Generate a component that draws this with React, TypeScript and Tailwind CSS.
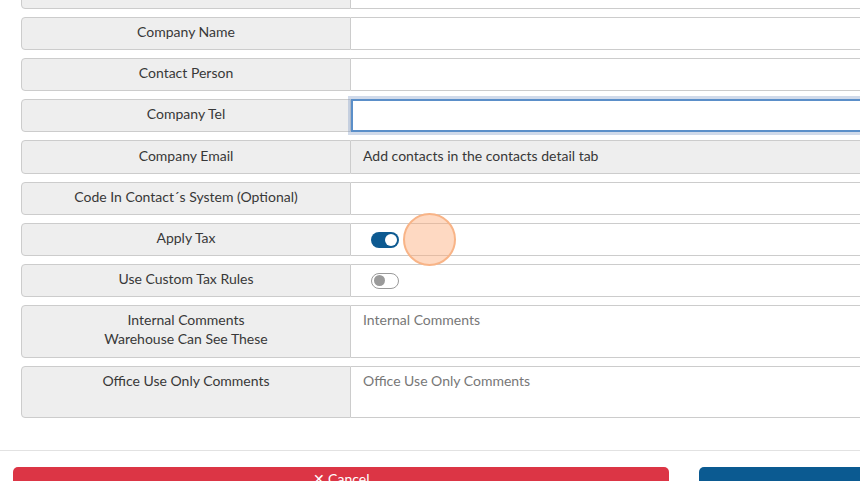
import React from "react";

const font = { fontFamily: "Lato, 'Open Sans', sans-serif" };

function Label({ children, tall }: { children: React.ReactNode; tall?: boolean }) {
  return (
    <div
      className={`w-[330px] shrink-0 bg-[#eeeeee] border border-[#cccccc] rounded-l-[4px] text-center text-[14px] text-[#383838] px-3 ${
        tall ? "pt-[4px] leading-[19px]" : "leading-[20px] flex items-center justify-center pb-[3px]"
      }`}
    >
      {children}
    </div>
  );
}

function Toggle({ on }: { on: boolean }) {
  return on ? (
    <div className="w-[28px] h-[16px] rounded-full bg-[#0d5a91] flex items-center justify-end px-[2px]">
      <div className="w-[12px] h-[12px] rounded-full bg-white" />
    </div>
  ) : (
    <div className="w-[28px] h-[16px] rounded-full bg-white border border-[#9a9a9a] flex items-center px-[2px]">
      <div className="w-[11px] h-[11px] rounded-full bg-[#9a9a9a]" />
    </div>
  );
}

export default function App() {
  return (
    <div className="w-[860px] h-[481px] overflow-hidden bg-white relative" style={font}>
      <div className="w-[900px] pl-[21px] -mt-[24px] flex flex-col gap-[8px]">
        <div className="flex h-[33px]">
          <Label>Company Code</Label>
          <div className="flex-1 border border-l-0 border-[#cccccc] bg-white" />
        </div>
        <div className="flex h-[33px]">
          <Label>Company Name</Label>
          <div className="flex-1 border border-l-0 border-[#cccccc] bg-white" />
        </div>
        <div className="flex h-[33px]">
          <Label>Contact Person</Label>
          <div className="flex-1 border border-l-0 border-[#cccccc] bg-white" />
        </div>
        <div className="flex h-[33px]">
          <Label>Company Tel</Label>
          <div className="flex-1 border-2 border-[#5b8fc9] bg-white shadow-[0_0_0_3px_rgba(120,150,195,0.35)]" />
        </div>
        <div className="flex h-[34px]">
          <Label>Company Email</Label>
          <div className="flex-1 border border-l-0 border-[#cccccc] bg-[#eeeeee] flex items-center pl-3 pb-[3px] text-[14px] text-[#383838]">
            Add contacts in the contacts detail tab
          </div>
        </div>
        <div className="flex h-[33px]">
          <Label>Code In Contact´s System (Optional)</Label>
          <div className="flex-1 border border-l-0 border-[#cccccc] bg-white" />
        </div>
        <div className="flex h-[33px]">
          <Label>Apply Tax</Label>
          <div className="flex-1 border border-l-0 border-[#cccccc] bg-white flex items-center pl-[20px]">
            <Toggle on />
          </div>
        </div>
        <div className="flex h-[33px]">
          <Label>Use Custom Tax Rules</Label>
          <div className="flex-1 border border-l-0 border-[#cccccc] bg-white flex items-center pl-[20px]">
            <Toggle on={false} />
          </div>
        </div>
        <div className="flex h-[53px]">
          <Label tall>
            Internal Comments
            <br />
            Warehouse Can See These
          </Label>
          <div className="flex-1 border border-l-0 border-[#cccccc] bg-white pl-3 pt-[4px] text-[14px] leading-[19px] text-[#777777]">
            Internal Comments
          </div>
        </div>
        <div className="flex h-[52px]">
          <Label tall>Office Use Only Comments</Label>
          <div className="flex-1 border border-l-0 border-[#cccccc] bg-white pl-3 pt-[4px] text-[14px] leading-[19px] text-[#777777]">
            Office Use Only Comments
          </div>
        </div>
      </div>

      <div className="mt-[32px] border-t border-[#e2e2e2] w-[860px]" />

      <div className="mt-[16px] pl-[13px] flex gap-[30px] w-[1400px]">
        <button className="w-[656px] h-[34px] bg-[#dc3545] rounded-[5px] text-white text-[14px] leading-[20px] flex justify-center items-start">
          <span className="pt-[2px]">✕ Cancel</span>
        </button>
        <button className="w-[656px] h-[34px] bg-[#0b5a91] rounded-[5px] text-white text-[14px]">
          Save
        </button>
      </div>

      <div className="absolute left-[403px] top-[213px] w-[53px] h-[53px] rounded-full bg-[rgba(252,170,120,0.45)] border-2 border-[#f8b487]" />
    </div>
  );
}
